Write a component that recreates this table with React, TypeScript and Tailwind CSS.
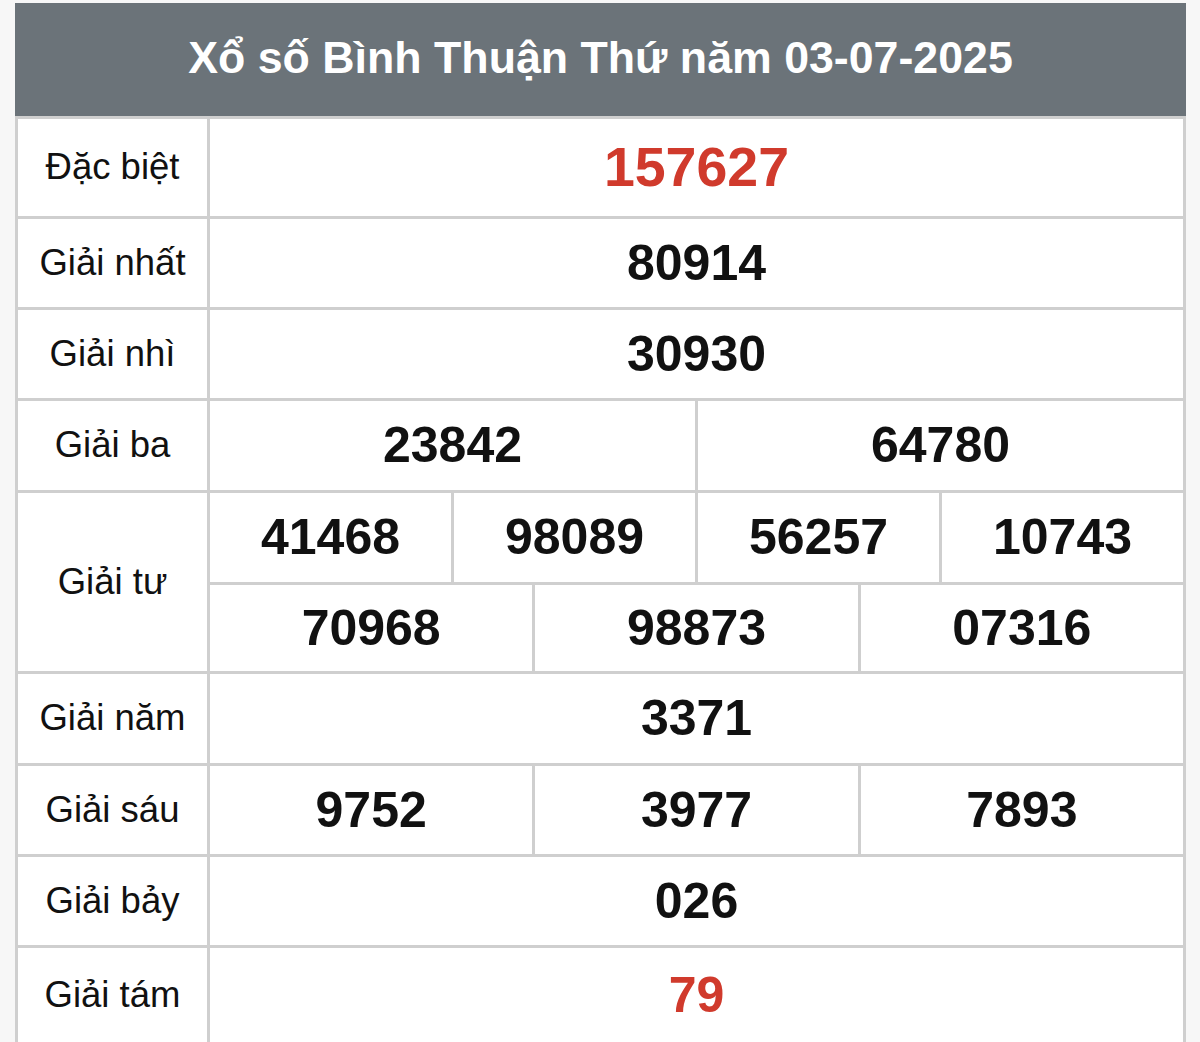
const rows: { label: string; values: string[][]; red?: boolean; big?: boolean; h: string }[] = [
  { label: "Đặc biệt", values: [["157627"]], red: true, big: true, h: "h-[97px]" },
  { label: "Giải nhất", values: [["80914"]], h: "h-[88px]" },
  { label: "Giải nhì", values: [["30930"]], h: "h-[88px]" },
  { label: "Giải ba", values: [["23842", "64780"]], h: "h-[89px]" },
  { label: "Giải tư", values: [["41468", "98089", "56257", "10743"], ["70968", "98873", "07316"]], h: "h-[89px]" },
  { label: "Giải năm", values: [["3371"]], h: "h-[89px]" },
  { label: "Giải sáu", values: [["9752", "3977", "7893"]], h: "h-[88px]" },
  { label: "Giải bảy", values: [["026"]], h: "h-[88px]" },
  { label: "Giải tám", values: [["79"]], red: true, h: "h-[94px]" },
];

export default function App() {
  return (
    <div className="h-[1042px] overflow-hidden bg-[#f7f7f7] pt-[3px] font-['Liberation_Sans',Arial,sans-serif]">
      <div className="ml-[15px] w-[1171px] bg-white">
        <div className="flex h-[113px] items-center justify-center bg-[#6b7379] pb-[3px]">
          <h1 className="text-[44.7px] font-bold text-white">Xổ số Bình Thuận Thứ năm 03-07-2025</h1>
        </div>
        <div className="border-x-[3px] border-[#cfcfcf]">
          {rows.map((row) => (
            <div key={row.label} className="flex border-t-[3px] border-[#cfcfcf]">
              <div className="flex w-[192px] shrink-0 items-center justify-center border-r-[3px] border-[#cfcfcf] text-[36.5px] text-[#111]">
                {row.label}
              </div>
              <div className="flex flex-1 flex-col">
                {row.values.map((line, i) => (
                  <div key={i} className={`flex ${row.h} ${i > 0 ? "border-t-[3px] border-[#cfcfcf]" : ""}`}>
                    {line.map((v, j) => (
                      <div
                        key={j}
                        className={`flex flex-1 items-center justify-center font-bold ${j > 0 ? "border-l-[3px] border-[#cfcfcf]" : ""} ${
                          row.big ? "text-[55.5px]" : "text-[50px]"
                        } ${row.red ? "text-[#d03a2c]" : "text-[#111]"}`}
                      >
                        {v}
                      </div>
                    ))}
                  </div>
                ))}
              </div>
            </div>
          ))}
        </div>
      </div>
    </div>
  );
}
